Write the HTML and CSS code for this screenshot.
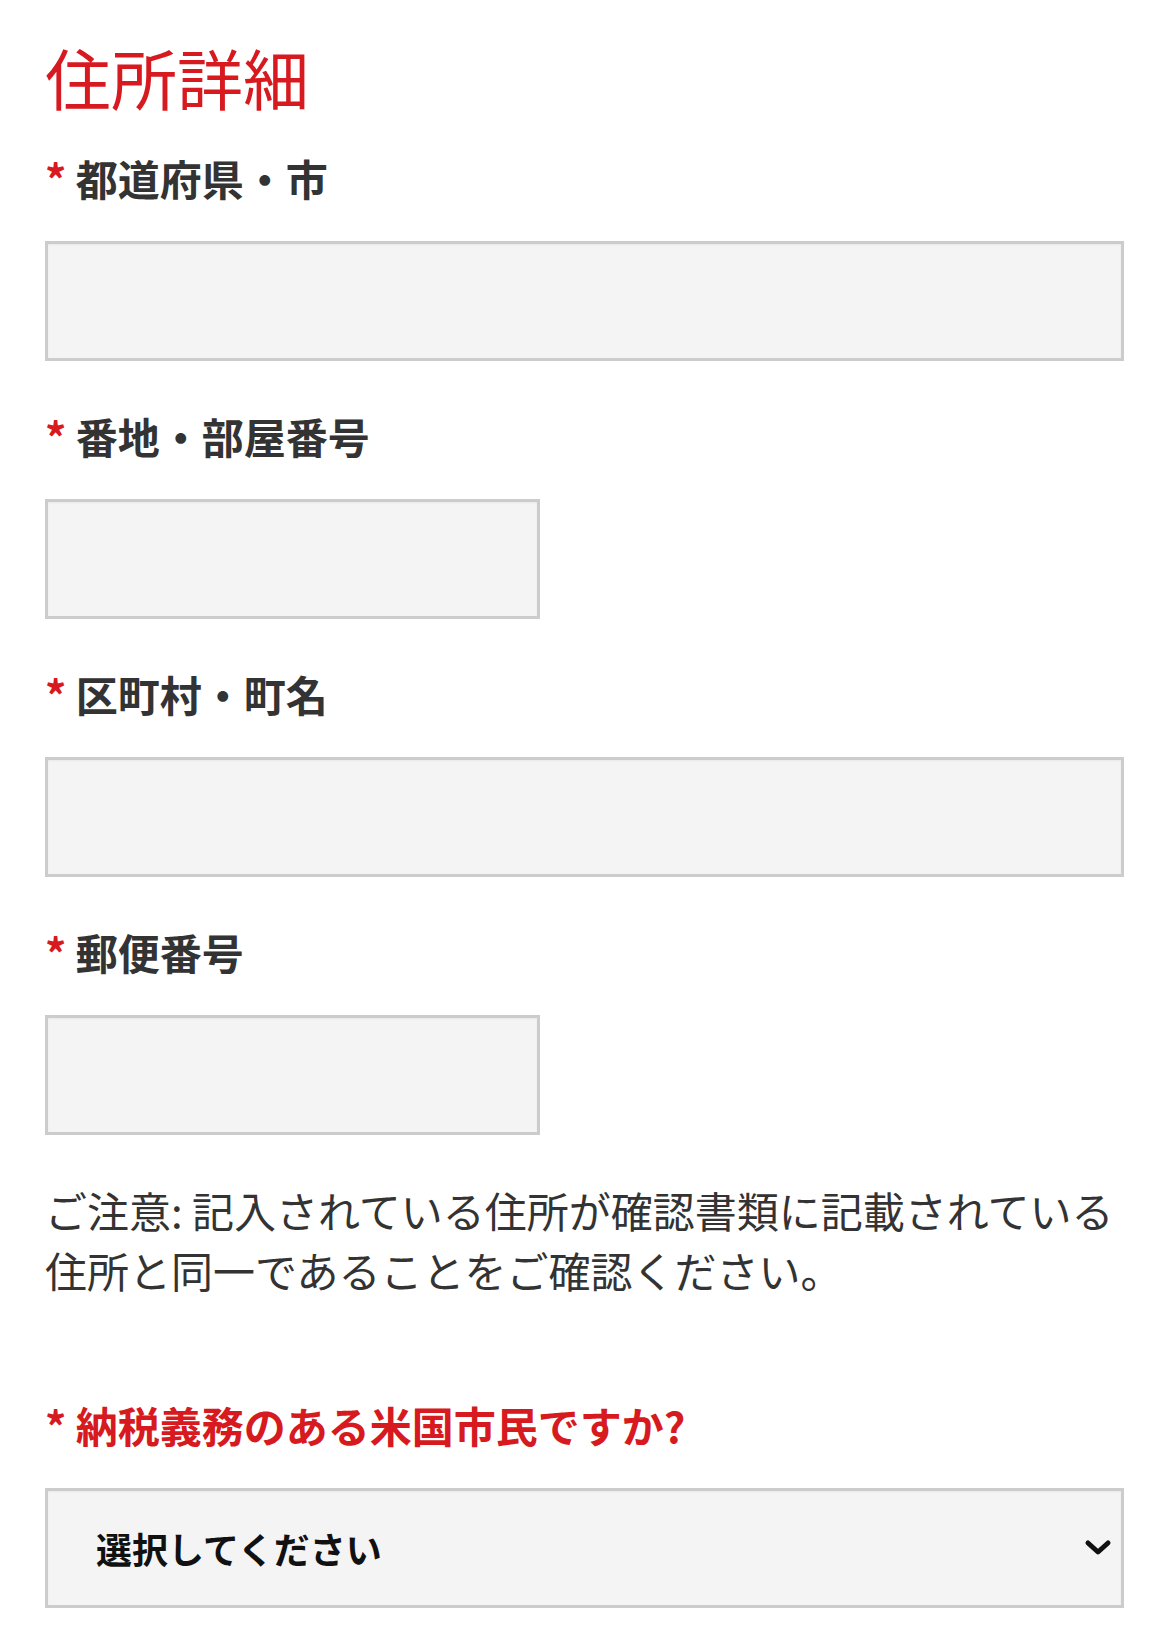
FILE: index.html
```html
<!DOCTYPE html>
<html lang="ja">
<head>
    <meta charset="UTF-8">
    <meta name="viewport" content="width=device-width, initial-scale=1.0">
    <title>住所詳細</title>
    <link rel="stylesheet" href="styles.css">
</head>
<body>
    <div class="container">
        <h1>住所詳細</h1>

        <div class="field">
            <label class="label" for="city"><span class="req">*</span> 都道府県・市</label>
            <input type="text" id="city" class="input">
        </div>

        <div class="field">
            <label class="label" for="street"><span class="req">*</span> 番地・部屋番号</label>
            <input type="text" id="street" class="input half">
        </div>

        <div class="field">
            <label class="label" for="town"><span class="req">*</span> 区町村・町名</label>
            <input type="text" id="town" class="input">
        </div>

        <div class="field">
            <label class="label" for="zip"><span class="req">*</span> 郵便番号</label>
            <input type="text" id="zip" class="input half">
        </div>

        <p class="note">ご注意: 記入されている住所が確認書類に記載されている住所と同一であることをご確認ください。</p>

        <div class="field">
            <label class="label question" for="citizen"><span class="req">*</span> 納税義務のある米国市民ですか?</label>
            <div class="select-wrap">
                <select id="citizen" class="select">
                    <option value="">選択してください</option>
                    <option value="yes">はい</option>
                    <option value="no">いいえ</option>
                </select>
                <svg class="chevron" width="28" height="18" viewBox="0 0 28 18">
                    <path d="M4 4 L14 13 L24 4" fill="none" stroke="#111" stroke-width="5" stroke-linecap="round" stroke-linejoin="round"/>
                </svg>
            </div>
        </div>
    </div>
</body>
</html>
```

FILE: styles.css
```css
body {
    font-family: "Noto Sans CJK JP", "Noto Sans", sans-serif;
    background-color: #fff;
    color: #333;
    margin: 0;
    padding: 36px 45px 0 45px;
}
h1 {
    margin: 0 0 32px 0;
    font-size: 66px;
    line-height: 80px;
    font-weight: 400;
    color: #d71920;
}
.field {
    margin-bottom: 45px;
}
.label {
    display: block;
    font-size: 42px;
    line-height: 60px;
    font-weight: 700;
    color: #333;
    margin-bottom: 33px;
}
.req {
    color: #d71920;
}
.question {
    color: #d71920;
}
.input {
    display: block;
    box-sizing: border-box;
    width: 100%;
    height: 120px;
    border: 3px solid #ccc;
    background: #f4f4f4;
    box-shadow: inset 0 1px 2px rgba(0, 0, 0, 0.05);
    margin: 0;
    padding: 0 20px;
    font-family: inherit;
    font-size: 36px;
}
.input.half {
    width: 495px;
}
.note {
    margin: 0 0 95px 0;
    font-size: 42px;
    line-height: 60px;
    font-weight: 400;
    color: #333;
}
.select-wrap {
    position: relative;
}
.select {
    display: block;
    box-sizing: border-box;
    width: 100%;
    height: 120px;
    border: 3px solid #ccc;
    border-radius: 0;
    background: #f4f4f4;
    box-shadow: inset 0 1px 2px rgba(0, 0, 0, 0.05);
    -webkit-appearance: none;
    appearance: none;
    padding: 0 60px 0 48px;
    font-family: inherit;
    font-size: 36px;
    font-weight: 700;
    color: #111;
}
.chevron {
    position: absolute;
    right: 12px;
    top: 51px;
}
```
